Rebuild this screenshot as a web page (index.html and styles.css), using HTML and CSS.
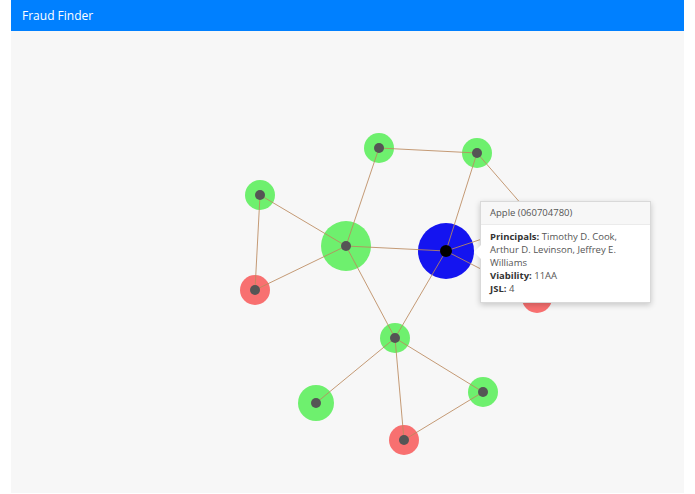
FILE: index.html
```html
<!DOCTYPE html>
<html>
<head>
<meta charset="utf-8">
<link rel="stylesheet" href="styles.css">
</head>
<body>
<div class="app">
  <header class="navbar"><span class="brand">Fraud Finder</span></header>
  <main class="canvas">
    <svg class="graph" width="673" height="462" viewBox="0 0 673 462">
      <g class="nodes">
        <circle class="n-green" cx="368" cy="117" r="15"/>
        <circle class="n-green" cx="466" cy="122" r="15"/>
        <circle class="n-green" cx="249" cy="164" r="15"/>
        <circle class="n-green" cx="335" cy="215" r="25"/>
        <circle class="n-blue" cx="435" cy="220" r="28"/>
        <circle class="n-red" cx="244" cy="259" r="15"/>
        <circle class="n-green" cx="525" cy="190" r="15"/>
        <circle class="n-red" cx="526" cy="267" r="15"/>
        <circle class="n-green" cx="384" cy="307" r="15"/>
        <circle class="n-green" cx="305" cy="372" r="18"/>
        <circle class="n-green" cx="472" cy="361" r="15"/>
        <circle class="n-red" cx="393" cy="409" r="15"/>
      </g>
      <g class="edges">
        <line x1="368" y1="117" x2="466" y2="122"/>
        <line x1="368" y1="117" x2="335" y2="215"/>
        <line x1="466" y1="122" x2="435" y2="220"/>
        <line x1="466" y1="122" x2="525" y2="190"/>
        <line x1="249" y1="164" x2="335" y2="215"/>
        <line x1="249" y1="164" x2="244" y2="259"/>
        <line x1="244" y1="259" x2="335" y2="215"/>
        <line x1="335" y1="215" x2="435" y2="220"/>
        <line x1="335" y1="215" x2="384" y2="307"/>
        <line x1="435" y1="220" x2="384" y2="307"/>
        <line x1="435" y1="220" x2="525" y2="190"/>
        <line x1="435" y1="220" x2="526" y2="267"/>
        <line x1="384" y1="307" x2="305" y2="372"/>
        <line x1="384" y1="307" x2="472" y2="361"/>
        <line x1="384" y1="307" x2="393" y2="409"/>
        <line x1="472" y1="361" x2="393" y2="409"/>
      </g>
      <g class="dots">
        <circle cx="368" cy="117" r="5"/>
        <circle cx="466" cy="122" r="5"/>
        <circle cx="249" cy="164" r="5"/>
        <circle cx="335" cy="215" r="5"/>
        <circle class="dot-black" cx="435" cy="220" r="6"/>
        <circle cx="244" cy="259" r="5"/>
        <circle cx="525" cy="190" r="5"/>
        <circle cx="526" cy="267" r="5"/>
        <circle cx="384" cy="307" r="5"/>
        <circle cx="305" cy="372" r="5"/>
        <circle cx="472" cy="361" r="5"/>
        <circle cx="393" cy="409" r="5"/>
      </g>
    </svg>
    <div class="popover">
      <div class="popover-arrow"></div>
      <div class="popover-title">Apple (060704780)</div>
      <div class="popover-body">
        <p class="row"><b>Principals:</b> Timothy D. Cook, Arthur D. Levinson, Jeffrey E. Williams</p>
        <p class="row"><b>Viability:</b> 11AA</p>
        <p class="row"><b>JSL:</b> 4</p>
      </div>
    </div>
  </main>
</div>
</body>
</html>
```
FILE: styles.css
```css
html, body {
  margin: 0;
  padding: 0;
  background: #ffffff;
  font-family: "Open Sans", "Noto Sans", sans-serif;
}
.app {
  margin-left: 11px;
  width: 673px;
}
.navbar {
  height: 31px;
  background: #0080ff;
  display: flex;
  align-items: center;
  padding-left: 11px;
}
.brand {
  color: #ffffff;
  font-size: 12px;
  line-height: 1;
}
.canvas {
  position: relative;
  height: 462px;
  background: #f7f7f7;
}
.graph {
  display: block;
}
.n-green { fill: #6ef06e; }
.n-red { fill: #f87070; }
.n-blue { fill: #1414f0; }
.edges line {
  stroke: #bb8a5e;
  stroke-width: 1;
  stroke-opacity: 0.85;
}
.dots circle { fill: #555555; }
.dots .dot-black { fill: #000000; }
.popover {
  position: absolute;
  left: 469px;
  top: 170px;
  width: 169px;
  background: #ffffff;
  border: 1px solid rgba(0,0,0,0.15);
  box-shadow: 0 2px 6px rgba(0,0,0,0.2);
  font-size: 9.5px;
  color: #555555;
}
.popover-arrow {
  position: absolute;
  left: -7px;
  top: 43px;
  width: 0;
  height: 0;
  border-top: 7px solid transparent;
  border-bottom: 7px solid transparent;
  border-right: 7px solid #ffffff;
}
.popover-title {
  height: 22px;
  line-height: 22px;
  padding: 0 9px;
  background: #f7f7f7;
  border-bottom: 1px solid #ebebeb;
  color: #555555;
}
.popover-body {
  padding: 5px 9px 7px;
  line-height: 13px;
}
.row {
  margin: 0;
}
.popover-body b {
  color: #333333;
  font-weight: 700;
}
```
